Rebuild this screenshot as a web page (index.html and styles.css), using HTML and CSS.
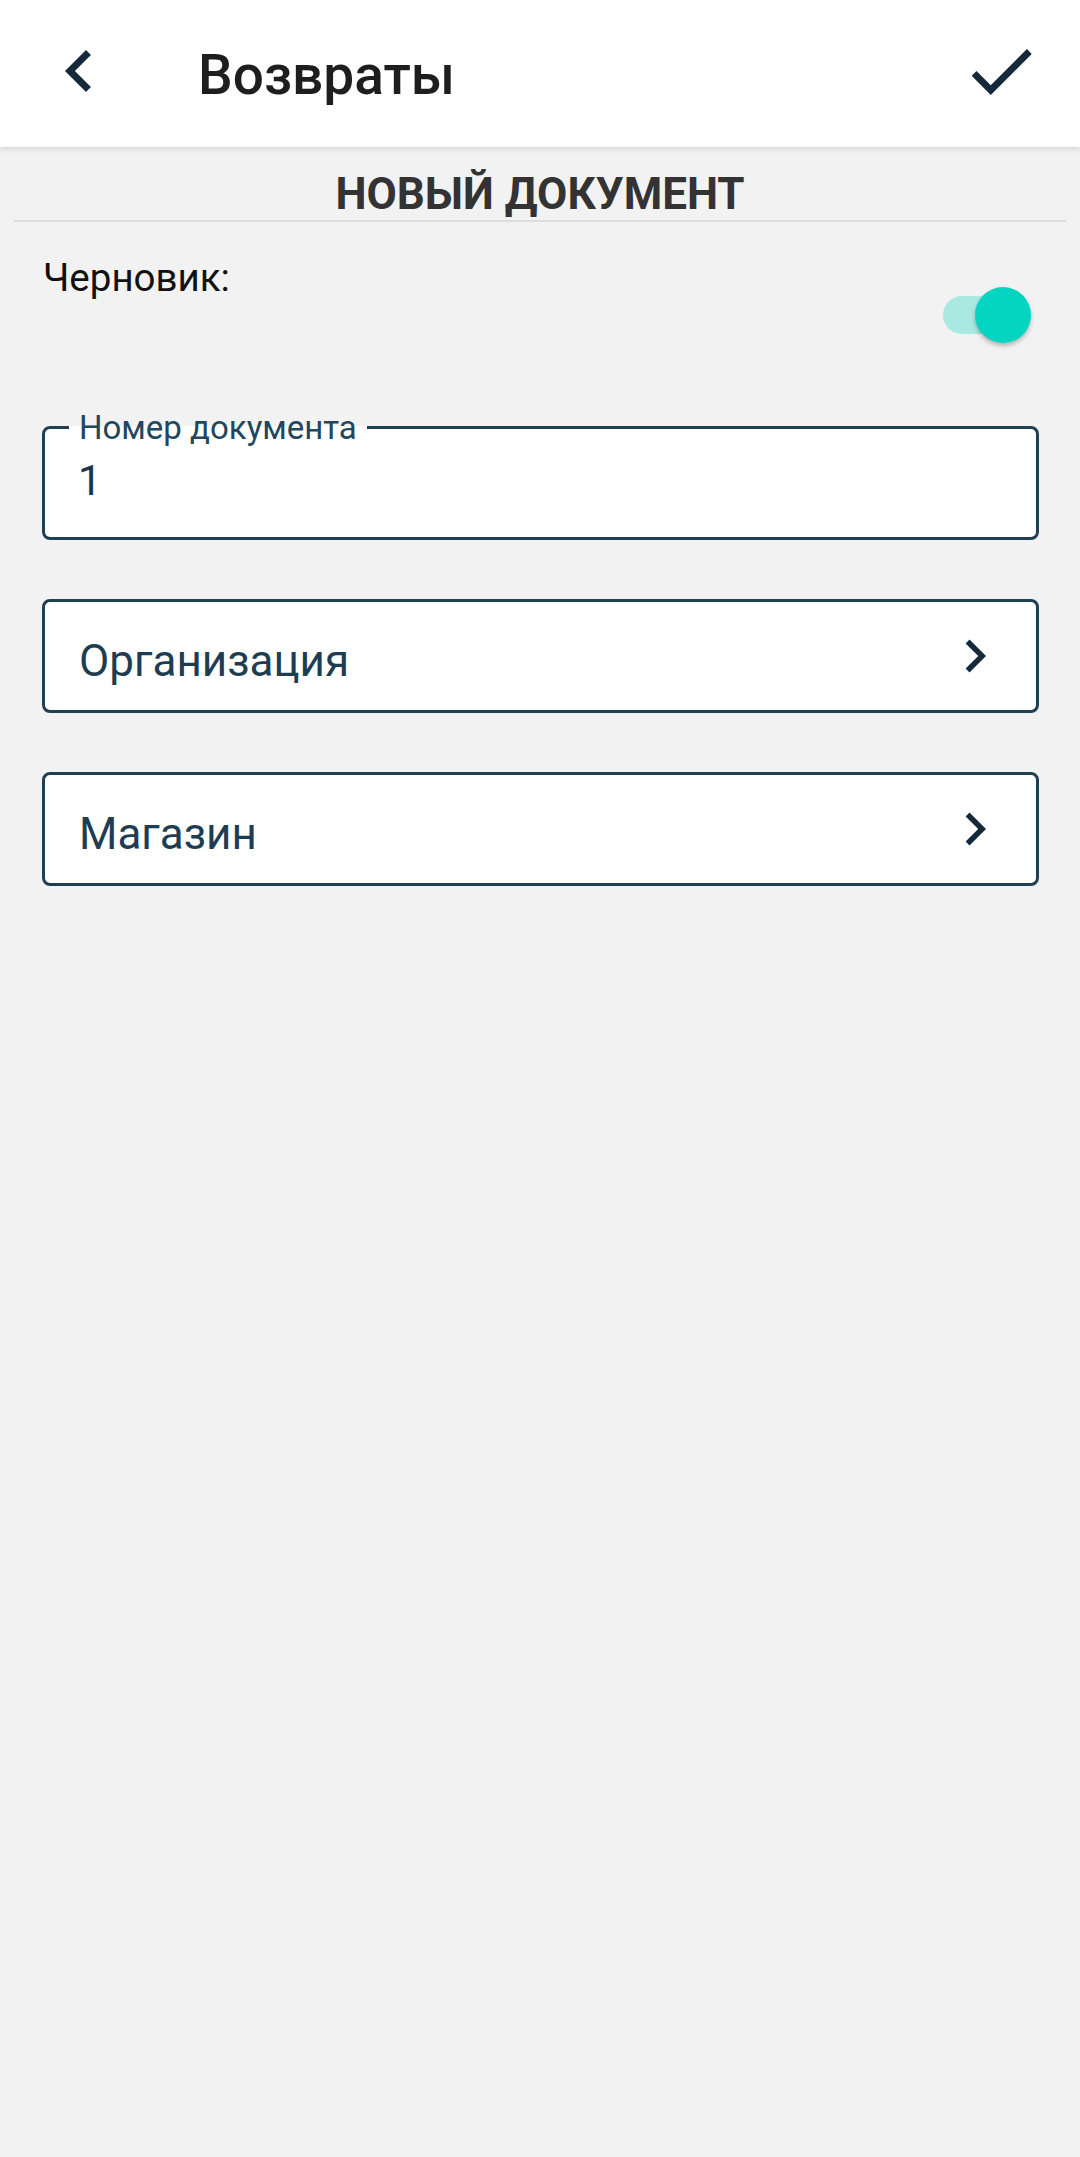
FILE: index.html
```html
<!DOCTYPE html>
<html lang="ru">
<head>
<meta charset="utf-8">
<title>Возвраты</title>
<link rel="stylesheet" href="styles.css">
</head>
<body>
<header class="appbar">
  <svg class="icon-back" viewBox="0 0 24 24" aria-hidden="true"><path d="M15.41 7.41L14 6l-6 6 6 6 1.41-1.41L10.83 12z"/></svg>
  <h1 class="appbar-title">Возвраты</h1>
  <svg class="icon-check" viewBox="0 0 24 24" aria-hidden="true"><path d="M9 16.17L4.83 12l-1.42 1.41L9 19 21 7l-1.41-1.41z"/></svg>
</header>
<main class="content">
  <div class="section-head">
    <h2 class="section-title">НОВЫЙ ДОКУМЕНТ</h2>
  </div>
  <div class="form">
    <div class="draft-row">
      <span class="draft-label">Черновик:</span>
      <div class="switch">
        <span class="switch-track"></span>
        <span class="switch-thumb"></span>
      </div>
    </div>
    <fieldset class="text-field">
      <legend class="text-field-label">Номер документа</legend>
      <div class="text-field-value">1</div>
    </fieldset>
    <div class="select-field">
      <span class="select-label">Организация</span>
      <svg class="icon-chevron" viewBox="0 0 24 24" aria-hidden="true"><path d="M10 6L8.59 7.41 13.17 12l-4.58 4.59L10 18l6-6z"/></svg>
    </div>
    <div class="select-field">
      <span class="select-label">Магазин</span>
      <svg class="icon-chevron" viewBox="0 0 24 24" aria-hidden="true"><path d="M10 6L8.59 7.41 13.17 12l-4.58 4.59L10 18l6-6z"/></svg>
    </div>
  </div>
</main>
</body>
</html>
```
FILE: styles.css
```css
* { box-sizing: border-box; }
html, body {
  margin: 0;
  padding: 0;
  background: #f2f2f2;
  font-family: Roboto, "Noto Sans", "Liberation Sans", sans-serif;
  min-height: 2157px;
}
.appbar {
  position: relative;
  z-index: 1;
  height: 147px;
  background: #ffffff;
  display: flex;
  align-items: flex-start;
  padding: 0 38px 0 37px;
  box-shadow: 0 2px 6px rgba(0, 0, 0, 0.13);
}
.icon-back {
  width: 84px;
  height: 84px;
  margin-top: 29px;
  fill: #15293b;
  flex: none;
}
.appbar-title {
  margin: 43px 0 0 77px;
  font-size: 55px;
  line-height: 64px;
  font-weight: 500;
  color: #1e1e1e;
}
.icon-check {
  width: 82px;
  height: 82px;
  margin: 30px 0 0 auto;
  fill: #15293b;
  flex: none;
}
.content {
  display: block;
}
.section-head {
  margin: 0 14px;
  padding-top: 21px;
  border-bottom: 2px solid #dcdcdc;
  text-align: center;
}
.section-title {
  margin: 0;
  font-size: 44px;
  line-height: 52px;
  font-weight: 700;
  color: #333333;
}
.form {
  padding: 33.4px 41px 0 42px;
  display: flex;
  flex-direction: column;
}
.draft-row {
  display: flex;
  justify-content: space-between;
  align-items: flex-start;
}
.draft-label {
  font-size: 38.5px;
  line-height: 46px;
  color: #111111;
  padding-left: 1px;
}
.switch {
  display: flex;
  align-items: center;
  margin: 32px 8px 0 0;
}
.switch-track {
  width: 80px;
  height: 38px;
  border-radius: 19px;
  background: #a9e9e1;
}
.switch-thumb {
  width: 56px;
  height: 56px;
  border-radius: 50%;
  background: #04d5c0;
  margin-left: -48px;
  box-shadow: 0 3px 4px rgba(0, 0, 0, 0.25);
}
.text-field {
  margin: 65.5px 0 0;
  padding: 0 28px 31.3px 33px;
  border: 3px solid #213f53;
  border-radius: 8px;
  background: #ffffff;
  min-width: 0;
}
.text-field-label {
  margin-left: -9px;
  padding: 0 10px;
  font-size: 33px;
  line-height: 38px;
  color: #22465c;
}
.text-field-value {
  margin-top: 9.2px;
  font-size: 42px;
  line-height: 50px;
  color: #1b3648;
}
.select-field {
  margin-top: 59px;
  height: 114px;
  display: flex;
  align-items: center;
  justify-content: space-between;
  padding: 0 28px 0 34px;
  border: 3px solid #213f53;
  border-radius: 8px;
  background: #ffffff;
}
.select-label {
  margin-top: 10px;
  font-size: 44px;
  line-height: 52px;
  color: #1e3d52;
}
.icon-chevron {
  width: 66px;
  height: 66px;
  fill: #15293b;
  flex: none;
}
```
